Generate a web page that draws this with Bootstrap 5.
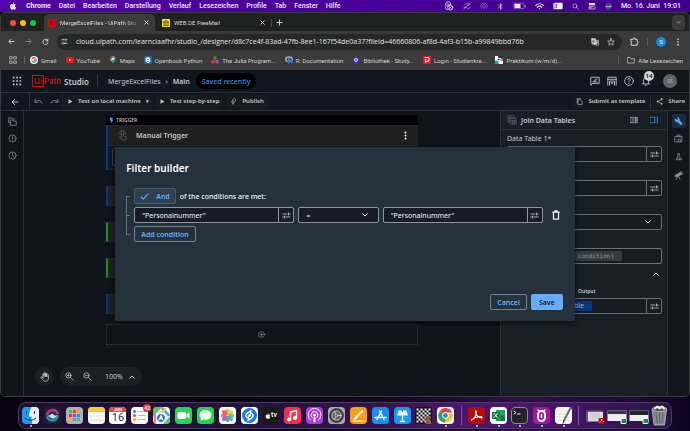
<!DOCTYPE html>
<html lang="de" data-bs-theme="dark">
<head>
<meta charset="utf-8">
<meta name="viewport" content="width=device-width, initial-scale=1">
<title>MergeExcelFiles - UiPath Studio</title>
<link href="https://cdn.jsdelivr.net/npm/bootstrap@5.3.0/dist/css/bootstrap.min.css" rel="stylesheet">
<style>
:root{--line:#2b3138;--edge:#65707a;--blue:#66adff}
html{height:100%}
body{min-height:100%;font:7px/9px Roboto,sans-serif;color:#dcdcdc;background:linear-gradient(90deg,#07020f 0,#0d0418 45%,#1d0830 62%,#350a50 75%,#22073c 92%,#0c0320 100%)}
svg{display:block;flex:none;fill:none;stroke:currentColor;stroke-width:2;stroke-linecap:round;stroke-linejoin:round}
.i5{width:5px;height:7px}.i7{width:7px;height:7px}.i8{width:8px;height:8px}.i9{width:9px;height:9px}.i10{width:10px;height:10px}.i11{width:11px;height:11px}.i17{width:17px;height:17px}
.solid{fill:currentColor;stroke:none}
a{color:inherit;text-decoration:none}
button{font:inherit;color:inherit;background:none;border:0;padding:0}
.btn{--bs-btn-padding-x:0px;--bs-btn-padding-y:0px;--bs-btn-border-radius:2px;font:inherit;line-height:inherit}
.mac-bar{height:12px;background:linear-gradient(90deg,#5306a6,#4a0099 50%,#40008c);color:#eee4f8;font-weight:500;padding:0 9px}
.mac-menus{gap:8px;margin-left:9px}
.mac-status{gap:9px}
.browser{border-radius:5px;overflow:hidden;background:#3b3b3b;border:1px solid #3a3d3f;margin-bottom:1px}
.tabstrip{height:18px;background:#1f2221;font-size:6px;padding:1px 4px 0 9px}
.lights{gap:4px}
.light{width:6px;height:6px;border-radius:50%}
.light.close-l{background:#fe4a43}.light.min-l{background:#f9bd0e}.light.max-l{background:#10c847}
.tab-item{height:17px;border-radius:5px 5px 0 0;padding:0 5px 0 4px}
.tab-item.current{background:#3b3b3b;width:111px;margin-left:8px}
.tab-item.other{width:117px;padding-left:7px;border-right:1px solid #4b4b4b;height:8px;border-radius:0}
.fade-name{white-space:nowrap;-webkit-mask-image:linear-gradient(90deg,#000 82%,#0004)}
.tab-search{background:#3a3c3c}
.addressbar{height:21px;padding:0 7px}
.nav-keys{gap:10px}
.omnibox{background:#262727;border-radius:8px;height:16px;padding:0 7px 0 4px;margin:0 8px 0 8px}
.omnibox input{background:none;border:0;color:#e4e4e4;padding:0;min-width:0;outline:0;font-family:"Open Sans",sans-serif}
.profile-dot{width:10px;height:10px;line-height:10px;font-size:6px;background:#1689d8}
.bookmarks{height:18px;font-size:6px;padding:0 6px 2px 8px;color:#d2d2d2;white-space:nowrap}
.bm{display:flex;align-items:center;gap:3px}
.bm-list{gap:9px}
.vline{width:1px;height:8px;background:#5a5a5a}
.bookmarks .first-line{margin:0 5px 0 7px}
.studio{font-family:"Noto Sans",sans-serif;background:#10151c;color:#c6c9cc;position:relative}
.studio-head{height:23px;border-bottom:1px solid var(--line);padding:0 12px 0 11px;background:#11171e}
.studio-head .vline{height:12px;background:#30363c}
.brand{color:#d80a10;font:500 8px/9px Inter,sans-serif;margin-left:10px}
.brand b{border:1px solid #d80a10;padding:0 1px;font-weight:400}
.product{font-size:8px;margin-left:3px}
.crumbs{gap:5px;margin-left:10px}
.saved{background:#000;color:#3c8ee8;border-radius:9px;height:16px;padding:0 6px;font-weight:500;margin-left:6px}
.head-icons{gap:7px}
.notice{position:absolute;left:3px;top:-5px;min-width:10px;height:10px;border-radius:5px;background:#d4d4d4;color:#111;font:600 6px/10px "Noto Sans",sans-serif;text-align:center}
.avatar{width:14px;height:14px;border-radius:50%;background:#5c6866;color:#a5adab;font-size:5px;margin-left:5px}
.tools{height:18px;border-bottom:1px solid var(--line);font-size:6px;font-weight:600;background:#11171e}
.tool{height:14px;padding:0 4px!important;background:#161b21!important;color:#c6c9cc!important;display:flex;align-items:center;gap:5px;border:0;font-weight:600!important;white-space:nowrap}
.run-tools{gap:3px;margin-left:1px}
.end-tools{gap:1px}
.back-cell{width:29px}.undo-cell{width:33px}
.caret{font-size:5px}
.bar-end{border-right:1px solid var(--line)}
.rail{width:23px;padding-top:6px;gap:8px;display:flex;flex-direction:column;align-items:center;color:#8c9399}
.flow{width:65.5%;margin:4px auto 0}
.trigger-strip{background:#000;height:10px;font-size:5px;font-weight:600;line-height:10px;padding-left:3px;gap:2px;color:#b9bcbf}
.trigger-strip svg{color:#4a9af5}
.step{border:1px solid #24282d;border-left:2px solid #0a348d;background:#202020;height:20px;margin-bottom:16px}
.step.green{border-left-color:#16921b}
.step.first{height:45px;background:#14191f}
.step-title{height:20px;background:#202020;border-bottom:1px solid #2a2d30;font-weight:600;padding:0 7px 0 9px}
.step-slot{border:1px solid #3b4248;border-radius:2px;height:18px;margin:2px 4px}
.drop{width:100%;height:21px;border:1px dotted #343a40;color:#8a9096;margin-top:-6px}
.zoombar{gap:6px;padding:0 0 10px 11px;color:#c9ccce}
.zoombar .round{width:19px;height:19px;border-radius:10px;background:#1a2026}
.zoombar .pill{height:19px;border-radius:10px;background:#1a2026;padding:0 6px 0 5px;gap:5px}
.props{width:168px;background:#182026;border-left:1px solid var(--line);border-right:1px solid var(--line)}
.props-head{height:19px;border-bottom:1px solid #2b3339;font-weight:600;padding:0 9px 0 6px}
.blue-ic{color:#3f8ae0}.dim-ic{color:#4c575f}
.props-body{padding:4px 5px 0 6px}
.props-body label{margin-bottom:3px}
.fieldbox{height:16px;border:1px solid var(--edge);border-radius:2px;flex-wrap:nowrap;background:#161c22}
.fieldbox input{background:none!important;border:0;padding:0 0 0 7px;font:inherit;min-height:0;color:inherit;box-shadow:none!important}
.fieldbox button{width:15px;border-left:1px solid var(--edge)!important;border-radius:0!important;display:flex;align-items:center;justify-content:center;color:#cfd5da}
.pickbox{display:grid;align-items:center}
.pickbox select,.pickbox svg{grid-area:1/1}
.pickbox select{height:100%;width:100%;appearance:none;background:none;border:0;color:inherit;font:inherit;padding:0 7px;min-height:0}
.pickbox svg{justify-self:end;margin-right:9px;pointer-events:none}
.props-body .fieldbox{margin-bottom:18px}
.props-body .cond{font:6px/10px "DejaVu Sans Mono",monospace;background:#333c41;color:#8e979c;border-radius:2px;padding:0 8px 0 4px;margin-right:39px}
.fold{padding:2px 2px 9px 0}
.props-body .out-label{font-size:5px;margin-bottom:2px;padding-left:71px}
.var-chip{background:#0a3380;color:#9fb6dc;padding:0 8px 0 4px;line-height:10px;margin-left:58px}
.rail.right{width:21px;gap:6px;padding-top:3px;background:#12171e}
.rail .on{background:#1c2b3d;color:#5ba2f5;border-radius:2px;width:14px;height:14px}
.veil{position:absolute;inset:0;padding-top:2px}
.dialog-box{width:66.8%;background:#25313b;padding:15px 12px 11px 11px;color:#f0f3f5;box-shadow:0 2px 6px #0009;border-radius:1px}
.dialog-box h1{font-size:10px;line-height:12px;font-weight:600;margin:0 0 14px}
.dialog-box .fieldbox{border-color:#8b979f;background:#161d27}
.dialog-box .fieldbox button{border-color:#8b979f!important}
.tree{width:8px;display:grid;grid-template-rows:1fr 1fr;margin:8px 0 7px}
.tree span{border:1px solid #65727b;border-right:0;width:4px}
.tree span+span{border-top:0}
.rules{gap:3px}
.and-check{height:16px;border:1px solid #46596a;background:#2f414f;border-radius:2px;color:var(--blue);padding:0 5px;font-weight:600;gap:7px;cursor:pointer}
.field-l{flex:161 1 0}.field-op{flex:80 1 0}
.bin{margin:0 2px 0 4px}
.outline{height:16px;border:1px solid #75828b!important;color:var(--blue)!important;font-weight:600!important;padding:0 6px!important}
.save{height:16px;background:var(--blue)!important;color:#14202c!important;font-weight:600!important;padding:0 7px!important}
.dialog-foot{margin-top:52px;gap:4px}
.dock-zone{height:33px;padding:4px 18px 2px}
.dock-tray{height:27px;border-radius:8px;border:1px solid #4a3d5d;padding:0 3px;background:linear-gradient(90deg,#1c122e 0,#22133a 30%,#32154b 56%,#4b176d 66%,#451567 85%,#281342 100%);gap:6px}
.dock-group{display:flex;justify-content:space-between;align-items:center}
.dg1{flex:434 1 0}.dg2{flex:105 1 0}.dg3{flex:83 1 0}
.dock-tray .vline{height:19px;background:#75578a}
.app{position:relative;width:17px;height:17px;border-radius:4px}
.running::after{content:"";position:absolute;left:8px;bottom:-3px;width:2px;height:2px;border-radius:50%;background:#ddd}
.alert-count{position:absolute;right:-3px;top:-3px;background:#f5333a;color:#fff;border-radius:4px;font:500 5px/8px Roboto,sans-serif;width:8px;height:8px;text-align:center}
.cal{background:#fff;color:#333;font:11px/11px Roboto,sans-serif;text-align:center;overflow:hidden}
.cal small{display:block;background:#f0443c;color:#fff;font:700 4px/5px Roboto,sans-serif}
.tv{background:#161c1c;color:#fff;font:500 7px/17px Roboto,sans-serif}
.mini{width:20px;height:16px}
</style>
<script src="https://cdn.jsdelivr.net/npm/bootstrap@5.3.0/dist/js/bootstrap.bundle.min.js"></script>
</head>
<body class="d-flex flex-column">
<svg class="d-none" aria-hidden="true">
<symbol id="apple" viewBox="0 0 24 24"><path d="M16 1c0 3-2 5-4.500 5C11.500 3.500 13.500 1.500 16 1zM12 7.500c1 0 2.500-1.200 4.500-1.200 1.800 0 3.300 1 4 2.200-3.700 2.200-3 7 .8 8.500C20 20 18.500 23 16.500 23c-1.500 0-2.200-1-4-1s-2.500 1-4 1C5.500 23 3 17.500 3 13.500 3 9 5.500 6.300 8.300 6.300c1.700 0 3 1.200 3.700 1.200z"/></symbol>
<symbol id="tune" viewBox="0 0 24 24"><path d="M2 8h11M17 8h5M17 5v6M2 16h5M7 13v6M11 16h11"/></symbol>
<symbol id="down" viewBox="0 0 24 24"><path stroke-width="3" d="M5 8l7 7 7-7"/></symbol>
<symbol id="up" viewBox="0 0 24 24"><path stroke-width="3" d="M5 16l7-7 7 7"/></symbol>
<symbol id="cross" viewBox="0 0 24 24"><path stroke-width="3" d="M6 6l12 12M18 6L6 18"/></symbol>
<symbol id="plus" viewBox="0 0 24 24"><path stroke-width="3" d="M12 3v18M3 12h18"/></symbol>
<symbol id="left" viewBox="0 0 24 24"><path stroke-width="3" d="M21 12H4M11 4l-8 8 8 8"/></symbol>
<symbol id="right" viewBox="0 0 24 24"><path stroke-width="3" d="M3 12h17M13 4l8 8-8 8"/></symbol>
<symbol id="play" viewBox="0 0 20 24"><path d="M2 3l16 9L2 21z"/></symbol>
<symbol id="lens" viewBox="0 0 24 24"><circle cx="10" cy="10" r="7"/><path d="M15 15l7 7"/></symbol>
<symbol id="bolt" viewBox="0 0 18 24"><path d="M4 1h10l-3 8h5L6 23l2-10H3z"/></symbol>
<symbol id="dots" viewBox="0 0 24 24"><circle cx="12" cy="4" r="2.500"/><circle cx="12" cy="12" r="2.500"/><circle cx="12" cy="20" r="2.500"/></symbol>
</svg>

<header class="mac-bar d-flex align-items-center">
<svg class="i8 solid" aria-hidden="true"><use href="#apple"/></svg>
<nav class="mac-menus d-flex" aria-label="Menü"><a href="#" class="fw-bold">Chrome</a><a href="#">Datei</a><a href="#">Bearbeiten</a><a href="#">Darstellung</a><a href="#">Verlauf</a><a href="#">Lesezeichen</a><a href="#">Profile</a><a href="#">Tab</a><a href="#">Fenster</a><a href="#">Hilfe</a></nav>
<div class="mac-status d-flex align-items-center ms-auto">
<svg class="i10" viewBox="0 0 24 24"><path d="M8 21C2 20 3 14 5 12 2 6 6 2 10 2c5 0 7 4 6 7M8 8h5M8 12h2"/><circle cx="15" cy="16" r="6"/><path d="M13 14l4 4M17 14l-4 4"/></svg>
<svg class="i8 opacity-75" viewBox="0 0 24 24"><path d="M3 21c6 0 1-8 7-8s5-10 10-9c3 1 0 7-5 6M6 7l9-4M3 16h7l7 5 4-5"/></svg>
<svg class="i8 opacity-50" viewBox="0 0 24 24"><path d="M4 19a10 10 0 1 1 16 0M8 16a5 5 0 1 1 8 0M12 13v8"/></svg>
<svg class="i7" viewBox="0 0 24 24"><path d="M5 7l13 10-6 5V2l6 5L5 17"/></svg>
<svg width="13" height="8" viewBox="0 0 38 24"><rect x="2" y="4" width="31" height="16" rx="4" opacity=".6"/><path class="solid" d="M4 6h18v12H4z"/><path d="M36 10v4"/></svg>
<svg class="i9" viewBox="0 0 24 24"><path stroke-width="3" d="M2 9c6-6 14-6 20 0M6 14c4-4 8-4 12 0M11.500 18h1"/></svg>
<svg width="10" height="8" viewBox="0 0 30 24"><rect x="1" y="2" width="28" height="20" rx="4" fill="#eee" stroke="none"/><path stroke="#520aa4" d="M5 7h2M5 12h2M5 17h2M11 7v10"/></svg>
<svg class="i7"><use href="#lens"/></svg>
<svg class="i8" viewBox="0 0 24 24"><rect x="2" y="3" width="20" height="7" rx="3" class="solid"/><rect x="2" y="14" width="20" height="7" rx="3"/><path d="M6 17.500h5"/></svg>
<svg class="i7" viewBox="0 0 24 24"><circle cx="12" cy="12" r="10" fill="#263b80" stroke="#bd527d"/><path stroke="#55d7cf" stroke-width="4" d="M5 14c8-8 8 6 14-4"/></svg>
<span>Mo. 16. Juni&nbsp; 19:01</span>
</div>
</header>

<main class="browser d-flex flex-column flex-grow-1">
<div class="tabstrip d-flex align-items-center">
<div class="lights d-flex"><span class="light close-l"></span><span class="light min-l"></span><span class="light max-l"></span></div>
<div class="tab-item current d-flex align-items-center gap-1"><svg class="i8" viewBox="0 0 24 24"><rect width="24" height="24" fill="#d9090f" stroke="none"/><path stroke="#411" d="M5 6v8c0 5 7 5 7 0V6M17 12v7M17 6v1"/></svg><span class="fade-name flex-grow-1">MergeExcelFiles - UiPath Stu</span><button aria-label="Tab schließen"><svg class="i7"><use href="#cross"/></svg></button></div>
<div class="tab-item other d-flex align-items-center gap-1"><svg class="i8" viewBox="0 0 24 24"><rect width="24" height="24" fill="#ffe000" stroke="none"/><path stroke="#333" d="M4 9l8-5 8 5zM6 10v8M12 10v8M18 10v8M4 20h16"/></svg><span class="flex-grow-1">WEB.DE FreeMail</span><button aria-label="Tab schließen"><svg class="i7"><use href="#cross"/></svg></button></div>
<button class="ms-1" aria-label="Neuer Tab"><svg class="i7"><use href="#plus"/></svg></button>
<button class="tab-search ms-auto rounded-1 p-1" aria-label="Tabs suchen"><svg class="i5"><use href="#down"/></svg></button>
</div>
<div class="addressbar d-flex align-items-center">
<div class="nav-keys d-flex align-items-center"><svg class="i7"><use href="#left"/></svg><svg class="i7 opacity-50"><use href="#right"/></svg><svg class="i7" viewBox="0 0 24 24"><path stroke-width="3" d="M20 4v6h-6M20 9a9 9 0 1 0 1 6"/></svg></div>
<div class="omnibox d-flex align-items-center flex-grow-1"><svg class="i7 me-2" viewBox="0 0 24 24"><path stroke-width="3" d="M3 6h9M3 18h3M13 18h8"/><circle cx="17" cy="6" r="3"/><circle cx="9" cy="18" r="3"/></svg>
<input class="flex-grow-1" type="text" aria-label="Adresse" value="cloud.uipath.com/learnclaafhr/studio_/designer/d8c7ce4f-83ad-47fb-8ee1-167f54de0a37?fileId=46660806-af8d-4af3-b15b-a99849bbd76b">
<svg class="i8 me-2" viewBox="0 0 24 24"><path fill="#ccc" d="M2 2h11l4 16H4z"/><path d="M16 7h6v14H10l3-3M16 12h5M18 11v3M15 17l4-4"/><path stroke="#333" d="M10 8a3 3 0 1 0 0 4H8"/></svg><svg class="i8" viewBox="0 0 24 24"><path d="M12 2l3 7 7 .5-5.500 4.500 2 7.500L12 17.500 5.500 21.500l2-7.500L2 9.500 9 9z"/></svg></div>
<svg class="i9" viewBox="0 0 24 24"><path stroke-width="2.500" d="M3 6h6V4a2 2 0 0 1 4 0v2h6v6h1a2 2 0 0 1 0 4h-1v6H3v-6a3 3 0 0 0 0-5z"/></svg><span class="vline mx-2"></span>
<span class="profile-dot rounded-circle text-center text-white">S</span><button class="ms-2" aria-label="Menü"><svg class="i8 solid"><use href="#dots"/></svg></button>
</div>
<nav class="bookmarks d-flex align-items-center" aria-label="Lesezeichen">
<svg class="i8" viewBox="0 0 24 24"><path d="M2 2h7v7H2zM15 2h7v7h-7zM2 15h7v7H2zM15 15h7v7h-7z"/></svg><span class="vline first-line"></span>
<div class="bm-list d-flex">
<a class="bm" href="#"><svg class="i8" viewBox="0 0 24 24"><circle cx="12" cy="12" r="12" fill="#fff" stroke="none"/><g stroke-width="4" stroke-linecap="butt"><path stroke="#e94335" d="M6 9a7 7 0 0 1 11-2"/><path stroke="#fbbc05" d="M6 9a7 7 0 0 0 0 6"/><path stroke="#34a853" d="M6 15a7 7 0 0 0 10 2"/><path stroke="#4285f4" d="M12 12h7c0 3-1 4-3 5"/></g></svg>Gmail</a>
<a class="bm" href="#"><svg class="i8" viewBox="0 0 24 24"><rect y="3" width="24" height="18" rx="5" fill="#f01616" stroke="none"/><path fill="#fff" stroke="none" d="M9 8l8 4-8 4z"/></svg>YouTube</a>
<a class="bm" href="#"><svg class="i8" viewBox="0 0 24 24"><path fill="#34a853" stroke="none" d="M12 24C11 17 4 15 4 8a8 8 0 0 1 16 0c0 7-7 9-8 16z"/><path fill="#4285f4" stroke="none" d="M12 0a8 8 0 0 1 8 6l-8 4z"/><path fill="#ea4335" stroke="none" d="M12 0C8 0 5 2 4 6l8 4z"/><path fill="#fbbc05" stroke="none" d="M4 10l8-2-5 8z"/><circle cx="12" cy="8" r="3" fill="#fff" stroke="none"/></svg>Maps</a>
<a class="bm" href="#"><svg class="i8" viewBox="0 0 24 24"><rect width="24" height="24" rx="3" fill="#1263b3" stroke="none"/><path fill="#fff" stroke="none" d="M4 6l9-3 6 4v11l-7 3-7-4z"/><path stroke="#1263b3" d="M8 9l4 3 4-3M8 15l4 2 4-2"/></svg>Openbook Python</a>
<a class="bm" href="#"><svg class="i8" viewBox="0 0 24 24"><circle cx="12" cy="6" r="5.500" fill="#389826" stroke="none"/><circle cx="6" cy="17" r="5.500" fill="#cb3c33" stroke="none"/><circle cx="18" cy="17" r="5.500" fill="#9558b2" stroke="none"/></svg>The Julia Program...</a>
<a class="bm" href="#"><svg class="i8" viewBox="0 0 24 24"><ellipse cx="12" cy="10" rx="10" ry="7" stroke="#aaa" stroke-width="4"/><path stroke="#2876d0" stroke-width="4" d="M11 21V8h6c5 0 4 6 0 6h-5M16 14l5 7"/></svg>R: Documentation</a>
<a class="bm" href="#"><svg class="i8" viewBox="0 0 24 24"><path fill="#4b35e8" stroke="none" d="M12 0l11 12-11 12L1 12z"/><path stroke="#fff" d="M7 10l5-3 5 3-5 3zM8 14l4 3 4-3"/></svg>Bibliothek - Study...</a>
<a class="bm" href="#"><svg class="i8" viewBox="0 0 24 24"><rect width="24" height="24" fill="#e8131c" stroke="none"/><path stroke="#fff" stroke-width="3" d="M6 5h12v10h-6l-4 5v-8"/></svg>Login - Studienkre...</a>
<a class="bm" href="#"><svg class="i8" viewBox="0 0 24 24"><rect width="24" height="24" fill="#fff" stroke="none"/><path fill="#152b59" stroke="none" d="M10 0h14v12H8z"/><path fill="#0fa3c3" stroke="none" d="M0 14h14l-3 10H0z"/><path fill="#e8508d" stroke="none" d="M15 7h9v7H14z"/><path stroke="#fff" stroke-width="3" d="M5 7h12l-6 12"/></svg>Praktikum (w/m/d)...</a>
</div>
<span class="vline ms-auto me-2"></span><a class="bm" href="#"><svg class="i8" viewBox="0 0 24 24"><path d="M2 4h7l3 4h10v13H2z"/></svg>Alle Lesezeichen</a>
</nav>

<div class="studio d-flex flex-column flex-grow-1">
<header class="studio-head d-flex align-items-center">
<button aria-label="Apps"><svg class="i10 solid" viewBox="0 0 24 24"><path d="M2 2h4v4H2zM10 2h4v4h-4zM18 2h4v4h-4zM2 10h4v4H2zM10 10h4v4h-4zM18 10h4v4h-4zM2 18h4v4H2zM10 18h4v4h-4zM18 18h4v4h-4z"/></svg></button>
<span class="brand"><b>Ui</b>Path</span><span class="product fw-semibold">Studio</span><span class="vline ms-2"></span>
<nav class="crumbs d-flex align-items-center" aria-label="Pfad"><a href="#">MergeExcelFiles</a><span>›</span><a href="#" class="fw-semibold">Main</a></nav>
<span class="saved d-flex align-items-center">Saved recently</span>
<div class="head-icons d-flex align-items-center ms-auto">
<svg class="i10" viewBox="0 0 24 24"><path d="M2 22V3h20v15H6zM7 14h10M8 13l7-7 2 2-6 6"/></svg>
<svg class="i10" viewBox="0 0 24 24"><path d="M2 22V3h20v19M2 8h20M6 22V12h12v10M12 14v5M9.500 16.500h5"/></svg>
<svg class="i10" viewBox="0 0 24 24"><circle cx="12" cy="12" r="10.500"/><path d="M9 9c0-4 6-4 6 0 0 2-3 2-3 5M12 17.500v.5"/></svg>
<button class="position-relative" aria-label="Mitteilungen"><svg class="i10" viewBox="0 0 24 24"><path d="M3 19h18M6 18v-8a6 6 0 0 1 12 0v8M12 2v2M10 22h4"/></svg><span class="notice">14</span></button>
<span class="avatar d-flex align-items-center justify-content-center">SE</span>
</div>
</header>
<div class="tools d-flex align-items-center">
<button class="back-cell d-flex justify-content-center align-items-center bar-end h-100" aria-label="Zurück"><svg class="i8"><use href="#left"/></svg></button>
<div class="undo-cell d-flex align-items-center justify-content-around bar-end h-100 opacity-50"><svg class="i9" viewBox="0 0 24 24"><path stroke-width="3" d="M3 6v8h8M3 14c4-6 14-7 18 2"/></svg><svg class="i9" viewBox="0 0 24 24"><path stroke-width="3" d="M21 6v8h-8M21 14C17 8 7 7 3 16"/></svg></div>
<div class="run-tools d-flex">
<button class="btn tool"><svg class="i5 solid"><use href="#play"/></svg>Test on local machine<span class="caret">▾</span></button>
<button class="btn tool"><svg class="i5 solid"><use href="#play"/></svg>Test step-by-step</button>
<button class="btn tool"><svg class="i7" viewBox="0 0 24 24"><path d="M9 20l-3-5 4-1V5l5-4 5 5-4 8h-4l-1 9M9 8l-4 4"/></svg>Publish</button></div>
<div class="end-tools d-flex ms-auto"><button class="btn tool"><svg class="i7" viewBox="0 0 24 24"><path d="M8 6h8l5 5v11H8zM4 18V2h11"/></svg>Submit as template</button><span class="bar-end"></span><button class="btn tool"><svg class="i7" viewBox="0 0 24 24"><path d="M18 5L5 12l13 7"/><g fill="currentColor"><circle cx="19" cy="4" r="2"/><circle cx="5" cy="12" r="2"/><circle cx="19" cy="20" r="2"/></g></svg>Share</button></div>
</div>
<div class="d-flex flex-grow-1">
<nav class="rail bar-end" aria-label="Projekt">
<svg class="i9" viewBox="0 0 24 24"><path d="M7 8h6l2 3h7v11H7zM17 7V5h-6L9 2H2v13h4"/></svg>
<svg class="i9" viewBox="0 0 24 24"><circle cx="12" cy="12" r="9.500"/><path d="M12 7v6M12 16.500v.5"/></svg>
<svg class="i9" viewBox="0 0 24 24"><circle cx="12" cy="12" r="9.500"/><path d="M12 6v6l4 4"/></svg>
</nav>
<section class="flex-grow-1 d-flex flex-column">
<div class="flow">
<div class="trigger-strip d-flex align-items-center"><svg class="i5 solid"><use href="#bolt"/></svg>TRIGGER</div>
<div class="step first"><div class="step-title d-flex align-items-center"><svg class="i11 dim-ic" viewBox="0 0 24 24"><path d="M10 14V6a2 2 0 0 1 4 0v7l6 2-1 7h-8l-5-6zM7 10a6 6 0 1 1 10 0"/></svg><span class="ms-2">Manual Trigger</span><button class="ms-auto text-white" aria-label="Mehr"><svg class="i9 solid"><use href="#dots"/></svg></button></div><div class="step-slot"></div></div>
<div class="step"></div><div class="step green"></div><div class="step green"></div><div class="step"></div>
<button class="drop d-flex align-items-center justify-content-center" aria-label="Aktivität hinzufügen"><svg class="i7" viewBox="0 0 24 24"><circle cx="12" cy="12" r="10"/><path d="M12 7v10M7 12h10"/></svg></button>
</div>
<div class="zoombar d-flex mt-auto"><button class="round d-flex align-items-center justify-content-center" aria-label="Verschieben"><svg class="i10" viewBox="0 0 24 24"><path d="M7 14V5a1.500 1.500 0 0 1 3 0v6V3a1.500 1.500 0 0 1 3 0v8V4a1.500 1.500 0 0 1 3 0v8V7a1.500 1.500 0 0 1 4 0v9c0 4-3 6-6 6-5 0-6-1-12-9 0-2 3-2 5 2"/></svg></button>
<div class="pill d-flex align-items-center"><button class="me-1" aria-label="Vergrößern"><svg class="i9" viewBox="0 0 24 24"><circle cx="9" cy="9" r="7"/><path d="M14.500 14.500L22 22M6.500 9h5M9 6.500v5"/></svg></button><button class="me-1" aria-label="Verkleinern"><svg class="i9" viewBox="0 0 24 24"><circle cx="9" cy="9" r="7"/><path d="M14.500 14.500L22 22M6.500 9h5"/></svg></button><span class="ms-1">100%</span><svg class="i8"><use href="#up"/></svg></div></div>
</section>
<aside class="props">
<div class="props-head d-flex align-items-center"><svg class="i10 dim-ic" viewBox="0 0 24 24"><path d="M6 17H2V2h15v4M2 7h15M7 2v15M8 8h14v14H8zM8 13h14M8 17h14M13 13v9M18 13v9"/></svg><span class="ms-1 me-auto">Join Data Tables</span><svg class="i8 me-2" viewBox="0 0 24 24"><path d="M1 4h22v16H1zM6 9h6M6 15h6M16 8v8h3V8z"/></svg><svg class="i8 ms-1 blue-ic" viewBox="0 0 24 24"><path d="M1 4h22v16H1zM14 4v16M14 12h9"/></svg></div>
<div class="props-body">
<label for="dt1" class="d-block">Data Table 1*</label>
<div class="fieldbox input-group"><input id="dt1" class="form-control"><button aria-label="Optionen"><svg class="i9"><use href="#tune"/></svg></button></div>
<div class="fieldbox input-group"><input class="form-control" aria-label="Data Table 2"><button aria-label="Optionen"><svg class="i9"><use href="#tune"/></svg></button></div>
<div class="fieldbox pickbox"><select aria-label="Join Type"><option></option></select><svg class="i8"><use href="#down"/></svg></div>
<div class="fieldbox d-flex align-items-center justify-content-end mb-1"><span class="cond">condition)</span></div>
<div class="fold d-flex justify-content-end"><svg class="i8"><use href="#up"/></svg></div>
<label for="out" class="out-label d-block fw-semibold">Output</label>
<div class="fieldbox input-group align-items-center"><span class="var-chip">able</span><input id="out" class="form-control"><button class="h-100" aria-label="Optionen"><svg class="i9"><use href="#tune"/></svg></button></div>
</div>
</aside>
<nav class="rail right" aria-label="Werkzeuge">
<span class="on d-flex align-items-center justify-content-center"><svg class="i9" viewBox="0 0 24 24"><path fill="currentColor" stroke="none" d="M3 3l5 5 3-3-4-4c5-2 9 3 8 7l8 10-4 4-10-8C4 15 0 8 3 3z"/></svg></span>
<svg class="i9" viewBox="0 0 24 24"><path d="M3 7h18v14H3zM8 7V3h8v4M11 21v-7h6v7"/></svg>
<svg class="i8 mt-1" viewBox="0 0 24 24"><path d="M8 2h5M9 2v7L3 20h12M13 2v8M15 12l6 8h-7M6 15h8"/></svg>
<svg class="i9 mt-1" viewBox="0 0 24 24"><path fill="currentColor" d="M3 12l14-9 4 6-15 7z"/><path d="M11 14l-5 8M12 14l4 8M19 1l4 6"/></svg>
</nav>
</div>

<div class="veil d-flex align-items-center justify-content-center">
<section class="dialog-box" role="dialog" aria-labelledby="dlg">
<h1 id="dlg">Filter builder</h1>
<div class="d-flex"><div class="tree"><span></span><span></span></div>
<div class="rules d-flex flex-column flex-grow-1">
<div class="d-flex align-items-center gap-1"><input type="checkbox" class="visually-hidden" id="and" checked><label for="and" class="and-check d-flex align-items-center"><svg class="i9" viewBox="0 0 24 24"><path stroke-width="3" d="M3 13l6 6L21 5"/></svg>And</label><span class="fw-medium">of the conditions are met:</span></div>
<div class="d-flex align-items-center gap-1">
<div class="fieldbox field-l input-group"><input class="form-control" aria-label="Spalte" value="&quot;Personalnummer&quot;"><button aria-label="Optionen"><svg class="i9"><use href="#tune"/></svg></button></div>
<div class="fieldbox pickbox field-op"><select aria-label="Operator"><option>=</option></select><svg class="i8"><use href="#down"/></svg></div>
<div class="fieldbox field-l input-group"><input class="form-control" aria-label="Wert" value="&quot;Personalnummer&quot;"><button aria-label="Optionen"><svg class="i9"><use href="#tune"/></svg></button></div>
<button class="bin" aria-label="Löschen"><svg class="i10" viewBox="0 0 24 24"><path stroke-width="3" d="M4 5h16M9 2h6M6 6v16h12V6"/></svg></button>
</div>
<div class="d-flex"><button class="btn outline">Add condition</button></div>
</div></div>
<div class="dialog-foot d-flex justify-content-end"><button class="btn outline">Cancel</button><button class="btn save">Save</button></div>
</section>
</div>
</div>
</main>

<footer class="dock-zone">
<div class="dock-tray d-flex align-items-center">
<div class="dock-group dg1">
<span class="app running"><svg class="i17" viewBox="0 0 34 34"><rect width="34" height="34" rx="8" fill="#1c9bf6" stroke="none"/><path fill="#e9eef4" stroke="none" d="M19 0c-4 8-5 13-5 19h5c0 6 0 10 2 15h5a8 8 0 0 0 8-8V8a8 8 0 0 0-8-8z"/><path stroke="#123" d="M9 9v4M25 9v4M6 22c6 6 16 6 22 0"/></svg></span>
<span class="app"><svg class="i17" viewBox="0 0 34 34"><rect width="34" height="34" rx="8" fill="#231c35" stroke="none"/><circle cx="17" cy="17" r="14" fill="#26325e" stroke="none"/><path stroke="#d93f79" stroke-width="5" opacity=".8" d="M6 14c4-9 16-11 21-2"/><path stroke="#2aa9a8" stroke-width="5" opacity=".8" d="M7 21c5 9 16 7 20-2"/><path fill="#bfe2f5" stroke="none" d="M6 18c8-1 10-7 13-3 3 3 5 2 9 2-6 3-7 7-11 6-4-1-5-4-11-5z"/></svg></span>
<span class="app"><svg class="i17" viewBox="0 0 34 34"><rect width="34" height="34" rx="8" fill="#b0b2ba" stroke="none"/><g stroke-width="6" stroke-linecap="butt"><path stroke="#47b84c" d="M6 9h6"/><path stroke="#f04a3d" d="M14 9h6"/><path stroke="#ff9d23" d="M22 9h6"/><path stroke="#d9364f" d="M6 17h6"/><path stroke="#8058d0" d="M14 17h6"/><path stroke="#2f8dee" d="M22 17h6"/><path stroke="#f5a623" d="M6 25h6"/><path stroke="#38a8d8" d="M14 25h6"/><path stroke="#4fbf60" d="M22 25h6"/></g></svg></span>
<span class="app"><svg class="i17" viewBox="0 0 34 34"><rect width="34" height="34" rx="8" fill="#f8f7f2" stroke="none"/><path fill="#f9c923" stroke="none" d="M0 10V8a8 8 0 0 1 8-8h18a8 8 0 0 1 8 8v2z"/><path stroke="#ccc" stroke-width="1" d="M0 18h34M0 26h34"/></svg></span>
<span class="app cal"><small>JUN</small>16</span>
<span class="app"><svg class="i17" viewBox="0 0 34 34"><rect width="34" height="34" rx="8" fill="#fafafa" stroke="none"/><circle cx="7" cy="9" r="3" fill="#2f7df6" stroke="none"/><circle cx="7" cy="17" r="3" fill="#ef4a3d" stroke="none"/><circle cx="7" cy="25" r="3" fill="#ff9d23" stroke="none"/><path stroke="#bbb" d="M14 9h15M14 17h15M14 25h15"/></svg><span class="alert-count">42</span></span>
<span class="app"><svg class="i17" viewBox="0 0 34 34"><rect width="34" height="34" rx="8" fill="#f4f5ed" stroke="none"/><path fill="#55c663" stroke="none" d="M0 8a8 8 0 0 1 8-8h10L0 20zM20 34l14-15v7a8 8 0 0 1-8 8z"/><path stroke="#3e9bf4" stroke-width="5" d="M19 3l12 13"/><path stroke="#f4c542" stroke-width="5" d="M4 27L24 4"/><path stroke="#e87b9a" stroke-width="4" d="M4 16v14"/><circle cx="16" cy="22" r="9" fill="#1878e5" stroke="#fff"/><path fill="#fff" stroke="none" d="M16 14l6 14-6-4-6 4z"/></svg></span>
<span class="app"><svg class="i17" viewBox="0 0 34 34"><rect width="34" height="34" rx="8" fill="#24d652" stroke="none"/><rect x="5" y="10" width="17" height="14" rx="4" fill="#fff" stroke="none"/><path fill="#fff" stroke="none" d="M23 15l6-4v12l-6-4z"/></svg></span>
<span class="app"><svg class="i17" viewBox="0 0 34 34"><rect width="34" height="34" rx="8" fill="#25d24f" stroke="none"/><ellipse cx="17" cy="16" rx="12" ry="10" fill="#e8fbe9" stroke="none"/><path fill="#e8fbe9" stroke="none" d="M8 21l-1 7 7-4z"/></svg></span>
<span class="app"><svg class="i17" viewBox="0 0 34 34"><rect width="34" height="34" rx="8" fill="#fafafa" stroke="none"/><g stroke-width="8" opacity=".9"><path stroke="#f79723" d="M17 12V8"/><path stroke="#e7d23b" d="M21 13l3-3"/><path stroke="#75c053" d="M22 17h4"/><path stroke="#40b6a5" d="M21 21l3 3"/><path stroke="#4a8fe0" d="M17 22v4"/><path stroke="#8c62c2" d="M13 21l-3 3"/><path stroke="#d55aa4" d="M12 17H8"/><path stroke="#f0544f" d="M13 13l-3-3"/></g></svg></span>
<span class="app"><svg class="i17" viewBox="0 0 34 34"><rect width="34" height="34" rx="8" fill="#fff" stroke="none"/><circle cx="17" cy="17" r="15" fill="#167bed" stroke="none"/><path stroke="#fff" stroke-width="3" d="M20 7l-7 5c-4 3-4 6-1 9l3 2M14 27l7-5c4-3 4-6 1-9l-3-2M15 17l4-3M15 20l4-3"/></svg></span>
<span class="app tv d-flex align-items-center justify-content-center"><svg class="solid" width="6" height="6"><use href="#apple"/></svg>tv</span>
<span class="app"><svg class="i17" viewBox="0 0 34 34"><rect width="34" height="34" rx="8" fill="#fa2c49" stroke="none"/><path stroke="#fff" stroke-width="3" d="M13 25V10l12-3v15"/><circle cx="10" cy="25" r="4" fill="#fff" stroke="none"/><circle cx="22" cy="22" r="4" fill="#fff" stroke="none"/></svg></span>
<span class="app"><svg class="i17" viewBox="0 0 34 34"><rect width="34" height="34" rx="8" fill="#ad39da" stroke="none"/><path stroke="#fff" d="M9 26a13 13 0 1 1 16 0M12 21a7 7 0 1 1 10 0"/><circle cx="17" cy="16" r="3" fill="#fff" stroke="none"/><path stroke="#fff" stroke-width="4" d="M17 22v7"/></svg></span>
<span class="app"><svg class="i17" viewBox="0 0 34 34"><rect width="34" height="34" rx="8" fill="#a7aaac" stroke="none"/><circle cx="17" cy="17" r="13" fill="#555" stroke="#303234" stroke-dasharray="2 2" stroke-width="3"/><circle cx="17" cy="17" r="9" stroke="#ccc"/><circle cx="17" cy="17" r="3" stroke="#ccc"/><path stroke="#ccc" d="M20 17h6M15.500 14.500L12 9M15.500 19.500L12 25"/></svg></span>
<span class="app"><svg class="i17" viewBox="0 0 34 34"><rect width="34" height="34" rx="8" fill="#ff9c14" stroke="none"/><path stroke="#fff" stroke-width="4" d="M9 24L25 8"/><path stroke="#fff" d="M6 28h22"/></svg></span>
<span class="app"><svg class="i17" viewBox="0 0 34 34"><rect width="34" height="34" rx="8" fill="#168ff5" stroke="none"/><path stroke="#fff" stroke-width="3" d="M15 8l9 17M19 8L10 25M6 21h12M24 21h4"/></svg></span>
<span class="app"><svg class="i17" viewBox="0 0 34 34"><rect width="34" height="34" rx="8" fill="#1699f5" stroke="none"/><path fill="#e8f3fa" stroke="none" d="M9 7h16l3 10H6z"/><path stroke="#e8f3fa" stroke-width="3" d="M17 17v11M13 29h8"/><path stroke="#8a592e" d="M17 6v3"/></svg></span>
<span class="app"><svg class="i17" viewBox="0 0 34 34"><rect width="34" height="34" rx="5" fill="#16181a" stroke="none"/><g stroke="#e8e8e8" stroke-width="4" stroke-linecap="butt" stroke-dasharray="4 4"><path d="M3 5h28M7 9h24M3 13h28M7 17h24M3 21h28M7 25h24M3 29h28"/></g><path fill="#8d5c36" stroke="none" d="M20 34c0-5 3-5 3-9l-4 1 3-7c6-3 10 1 8 6l3 9z"/></svg></span>
<span class="app running"><svg class="i17" viewBox="0 0 34 34"><rect width="34" height="34" rx="8" fill="#fff" stroke="none"/><path fill="#ea4335" stroke="none" d="M17 17L5 9a14 14 0 0 1 25 2H17z"/><path fill="#fbc116" stroke="none" d="M17 17l13-6a14 14 0 0 1-14 20z"/><path fill="#2ca64c" stroke="none" d="M5 9l12 8-1 14A14 14 0 0 1 5 9z"/><circle cx="17" cy="17" r="6" fill="#3f80ec" stroke="#fff"/></svg></span>
</div>
<span class="vline"></span>
<div class="dock-group dg2">
<span class="app running"><svg class="i17" viewBox="0 0 34 34"><rect width="34" height="34" rx="8" fill="#bd0808" stroke="none"/><path stroke="#fff" stroke-width="2.500" d="M7 26c6-2 11-11 10-17-3-5-5 9 10 13 5-4-11-4-20 4z"/></svg></span>
<span class="app running"><svg class="i17" viewBox="0 0 34 34"><rect width="34" height="34" rx="8" fill="#fff" stroke="none"/><path fill="#21a366" stroke="none" d="M12 6h18v22H12z"/><path fill="#107c41" stroke="none" d="M4 10h15v14H4zM21 17h9v11h-9z"/><path stroke="#fff" d="M8 13l7 8M15 13l-7 8"/></svg></span>
<span class="app running"><svg class="i17" viewBox="0 0 34 34"><rect x="1" y="1" width="32" height="32" rx="7" fill="#222427" stroke="#8b8c8e"/><path stroke="#eee" d="M6 8l4 3-4 3M13 14h5"/></svg></span>
<span class="app running"><svg class="i17" viewBox="0 0 34 34"><rect width="34" height="34" rx="8" fill="#a516a2" stroke="none"/><rect x="10" y="8" width="14" height="20" rx="7" stroke="#fff" stroke-width="4"/><path stroke="#fff" stroke-width="3" d="M17 15v6M10 6l3 3M24 6l-3 3"/></svg></span>
<span class="app running"><svg class="i17" viewBox="0 0 34 34"><rect width="34" height="34" rx="8" fill="#f6f6f4" stroke="none"/><path stroke="#ccc" stroke-width="1" d="M4 8h26M4 14h26M4 20h26M4 26h26"/><path stroke="#61717c" stroke-width="4" d="M31 2L18 27"/><path stroke="#222" d="M18 27l-2 5"/></svg></span>
</div>
<span class="vline"></span>
<div class="dock-group dg3">
<svg class="mini" viewBox="0 0 40 32"><path fill="#dcdcdc" stroke="none" d="M2 5h34v22H2z"/><path stroke="#383838" stroke-width="3" stroke-linecap="butt" d="M2 6h34M4 5v22"/><path stroke="#aaa" stroke-width="1" d="M12 12h18M12 16h18M12 20h18"/><rect x="27" y="20" width="12" height="12" rx="3" fill="#c40c16" stroke="none"/><path stroke="#fff" stroke-width="1" d="M29 29c4-2 4-5 4-7 0 3 2 4 4 5"/></svg>
<svg class="mini" viewBox="0 0 40 32"><path fill="#eee" stroke="none" d="M1 5h38v21H1z"/><path fill="#333a3b" stroke="none" d="M1 5h38v7H1z"/><rect x="27" y="20" width="12" height="12" rx="3" fill="#fff" stroke="none"/><path fill="#168a48" stroke="none" d="M29 22h9v8h-9z"/></svg>
<svg class="mini" viewBox="0 0 40 32"><path fill="#eee" stroke="none" d="M1 5h38v21H1z"/><path fill="#222829" stroke="none" d="M1 5h38v9H1z"/><rect x="27" y="20" width="12" height="12" rx="3" fill="#fff" stroke="none"/><path fill="#168a48" stroke="none" d="M29 22h9v8h-9z"/></svg>
<svg width="17" height="21" viewBox="0 0 34 42"><path fill="#858991" stroke="#aeb1b7" d="M3 8h28l-4 32H7z"/><path stroke="#61656d" d="M10 14l2 22M17 14v22M24 14l-2 22"/><ellipse cx="17" cy="8" rx="14" ry="5" fill="#444852" stroke="#b8bac0"/><path stroke="#eee" stroke-width="4" d="M8 7l5-4 4 4 5-4 4 4"/><path stroke="#d88" d="M20 6l3 1"/></svg>
</div>
</div>
</footer>
</body>
</html>
